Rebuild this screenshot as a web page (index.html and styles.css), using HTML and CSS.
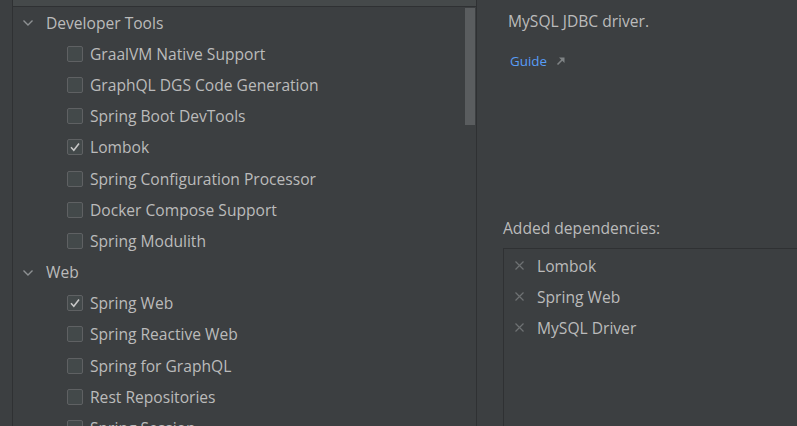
FILE: index.html
```html
<!DOCTYPE html>
<html>
<head>
<meta charset="utf-8">
<link rel="stylesheet" href="styles.css">
</head>
<body>
<div class="app">
  <div class="gutter"></div>
  <div class="tree-panel">
    <div class="tree-head"></div>
    <div class="tree">
      <div class="row cat"><svg class="chev" width="12" height="8" viewBox="0 0 12 8"><path d="M1.5 1.5 L6 6 L10.5 1.5" fill="none" stroke="#8e9193" stroke-width="1.4"/></svg><span>Developer Tools</span></div>
      <div class="row item"><span class="cb"></span><span>GraalVM Native Support</span></div>
      <div class="row item"><span class="cb"></span><span>GraphQL DGS Code Generation</span></div>
      <div class="row item"><span class="cb"></span><span>Spring Boot DevTools</span></div>
      <div class="row item"><span class="cb checked"><svg width="16" height="16" viewBox="0 0 16 16"><path d="M4 8.3 L6.8 11.2 L12 4.6" fill="none" stroke="#c7c7c7" stroke-width="1.6"/></svg></span><span>Lombok</span></div>
      <div class="row item"><span class="cb"></span><span>Spring Configuration Processor</span></div>
      <div class="row item"><span class="cb"></span><span>Docker Compose Support</span></div>
      <div class="row item"><span class="cb"></span><span>Spring Modulith</span></div>
      <div class="row cat"><svg class="chev" width="12" height="8" viewBox="0 0 12 8"><path d="M1.5 1.5 L6 6 L10.5 1.5" fill="none" stroke="#8e9193" stroke-width="1.4"/></svg><span>Web</span></div>
      <div class="row item"><span class="cb checked"><svg width="16" height="16" viewBox="0 0 16 16"><path d="M4 8.3 L6.8 11.2 L12 4.6" fill="none" stroke="#c7c7c7" stroke-width="1.6"/></svg></span><span>Spring Web</span></div>
      <div class="row item"><span class="cb"></span><span>Spring Reactive Web</span></div>
      <div class="row item"><span class="cb"></span><span>Spring for GraphQL</span></div>
      <div class="row item"><span class="cb"></span><span>Rest Repositories</span></div>
      <div class="row item"><span class="cb"></span><span>Spring Session</span></div>
    </div>
    <div class="scrollbar"></div>
  </div>
  <div class="details">
    <div class="desc">MySQL JDBC driver.</div>
    <div class="guide"><span>Guide</span><svg width="10" height="10" viewBox="0 0 10 10"><path d="M1.5 8.5 L7.5 2.5" stroke="#7f8385" stroke-width="1.6"/><path d="M3 1.5 H8.5 V7 Z" fill="#7f8385"/></svg></div>
    <div class="added-label">Added dependencies:</div>
    <div class="added-box">
      <div class="dep"><svg class="x" width="9" height="9" viewBox="0 0 9 9"><path d="M0.5 0.5 L8.5 8.5 M8.5 0.5 L0.5 8.5" stroke="#6e7173" stroke-width="1.2"/></svg><span>Lombok</span></div>
      <div class="dep"><svg class="x" width="9" height="9" viewBox="0 0 9 9"><path d="M0.5 0.5 L8.5 8.5 M8.5 0.5 L0.5 8.5" stroke="#6e7173" stroke-width="1.2"/></svg><span>Spring Web</span></div>
      <div class="dep"><svg class="x" width="9" height="9" viewBox="0 0 9 9"><path d="M0.5 0.5 L8.5 8.5 M8.5 0.5 L0.5 8.5" stroke="#6e7173" stroke-width="1.2"/></svg><span>MySQL Driver</span></div>
    </div>
  </div>
</div>
</body>
</html>
```
FILE: styles.css
```css
html, body {
  margin: 0;
  padding: 0;
  background: #3c3f41;
}
body {
  width: 797px;
  height: 426px;
  overflow: hidden;
  font-family: "Open Sans", "Noto Sans", sans-serif;
  font-size: 15.6px;
  color: #bbbbbb;
}
.app {
  display: flex;
  height: 426px;
}
.gutter {
  width: 12px;
  flex: none;
}
.tree-panel {
  position: relative;
  width: 465px;
  flex: none;
  border-left: 1px solid #2f3133;
  border-right: 1px solid #2f3133;
  box-sizing: border-box;
  overflow: hidden;
}
.tree-head {
  height: 6px;
  background: #45494a;
  border-bottom: 1px solid #2f3133;
}
.tree {
  margin-top: 0;
}
.row {
  height: 31.2px;
  display: flex;
  align-items: center;
  white-space: nowrap;
}
.row.cat {
  padding-left: 9px;
}
.chev {
  margin-right: 12px;
  margin-top: 1px;
}
.row.item {
  padding-left: 54px;
}
.cb {
  width: 16px;
  height: 16px;
  box-sizing: border-box;
  border: 1px solid #5f6163;
  border-radius: 2px;
  background: #43494a;
  margin-right: 7px;
  position: relative;
  flex: none;
}
.cb svg {
  position: absolute;
  left: -1px;
  top: -1px;
}
.scrollbar {
  position: absolute;
  left: 452px;
  top: 8px;
  width: 10px;
  height: 117px;
  background: #5a5d5f;
}
.details {
  flex: 1;
  padding-left: 26px;
  display: flex;
  flex-direction: column;
}
.desc {
  margin-top: 8px;
  padding-left: 5px;
  height: 26px;
  line-height: 26px;
}
.guide {
  margin-top: 18px;
  padding-left: 7px;
  font-size: 13.4px;
  color: #589df6;
  display: flex;
  align-items: center;
  height: 18px;
}
.guide svg {
  margin-left: 9px;
}
.added-label {
  margin-top: 147px;
  height: 22px;
  line-height: 22px;
}
.added-box {
  margin-top: 9px;
  border-top: 1px solid #2f3133;
  border-left: 1px solid #2f3133;
  flex: 1;
  padding-top: 1px;
}
.dep {
  height: 31px;
  display: flex;
  align-items: center;
  padding-left: 11px;
}
.dep .x {
  margin-right: 13px;
}
```
